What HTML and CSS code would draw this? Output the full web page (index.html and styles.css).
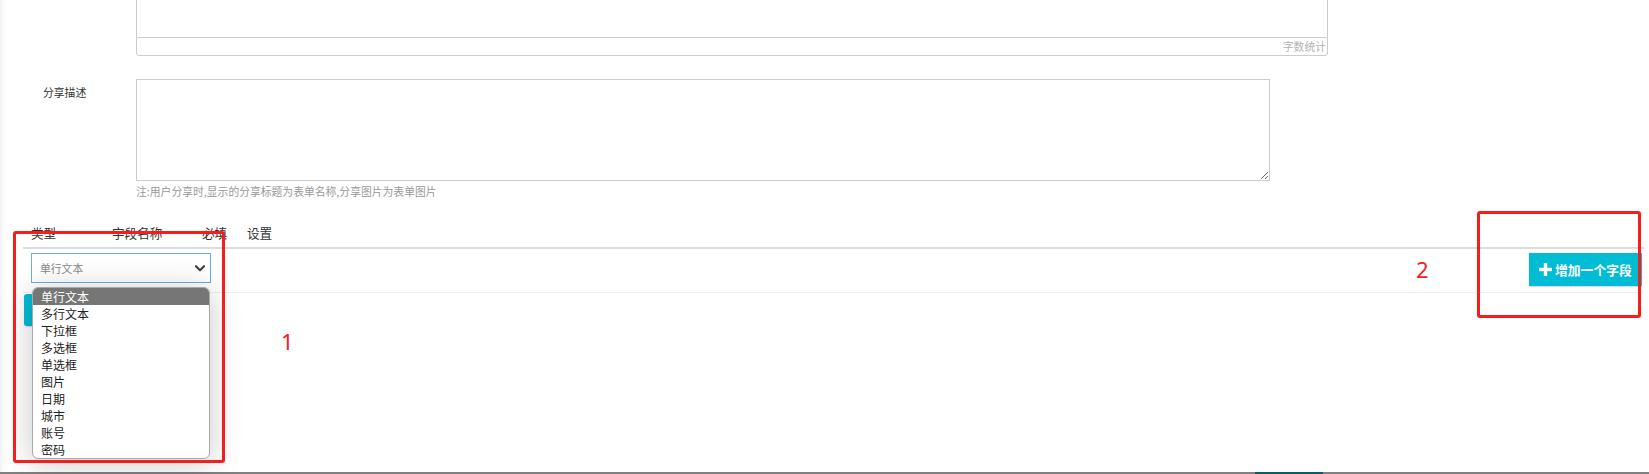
FILE: index.html
```html
<!DOCTYPE html>
<html lang="zh-CN">
<head>
<meta charset="utf-8">
<title>表单设置</title>
<link rel="stylesheet" href="styles.css">
</head>
<body>
<div class="page">
  <div class="editor-row">
    <div class="editor">
      <div class="editor-body"></div>
      <div class="editor-footer">字数统计</div>
    </div>
  </div>

  <div class="share-row">
    <label class="form-label">分享描述</label>
    <div class="form-field">
      <textarea class="share-textarea"></textarea>
      <div class="hint">注:用户分享时,显示的分享标题为表单名称,分享图片为表单图片</div>
    </div>
  </div>

  <div class="fields">
    <div class="fields-head">
      <div class="th th-type">类型</div>
      <div class="th th-name">字段名称</div>
      <div class="th th-req">必填</div>
      <div class="th th-set">设置</div>
    </div>
    <div class="fields-row">
      <div class="select-wrap">
        <div class="select">
          <span class="select-value">单行文本</span>
          <svg class="chevron" width="10" height="7" viewBox="0 0 10 7"><polyline points="1,1.2 5,5.2 9,1.2" fill="none" stroke="#444" stroke-width="2.2" stroke-linecap="round" stroke-linejoin="round"/></svg>
        </div>
        <ul class="select-menu">
          <li class="active">单行文本</li>
          <li>多行文本</li>
          <li>下拉框</li>
          <li>多选框</li>
          <li>单选框</li>
          <li>图片</li>
          <li>日期</li>
          <li>城市</li>
          <li>账号</li>
          <li>密码</li>
        </ul>
      </div>
      <button class="btn-add">
        <svg class="plus" width="13" height="13" viewBox="0 0 13 13"><rect x="4.8" y="0" width="3.4" height="13" fill="#fff"/><rect x="0" y="4.8" width="13" height="3.4" fill="#fff"/></svg>
        <span>增加一个字段</span>
      </button>
    </div>
  </div>

  <div class="actions">
    <button class="btn-save" aria-label="保存"></button>
  </div>

  <div class="annot annot-box-1"></div>
  <div class="annot annot-box-2"></div>
  <div class="annot annot-num annot-num-1">1</div>
  <div class="annot annot-num annot-num-2">2</div>
</div>
<div class="taskbar"><span class="taskbar-app"></span></div>
</body>
</html>
```

FILE: styles.css
```css
* { box-sizing: border-box; }
html, body { margin: 0; padding: 0; }
body {
  width: 1649px;
  height: 474px;
  overflow: hidden;
  display: flex;
  flex-direction: column;
  background: linear-gradient(to right, #f1f1f1 0, #fafafa 3px, #fff 8px);
  font-family: "Noto Sans CJK SC", "Noto Sans", sans-serif;
  color: #333;
}
.page { position: relative; flex: 1; }

/* editor with counter */
.editor-row { padding-left: 136px; }
.editor { width: 1192px; }
.editor-body {
  height: 37px;
  border-left: 1px solid #ccc;
  border-right: 1px solid #ccc;
}
.editor-footer {
  height: 19px;
  border: 1px solid #ccc;
  border-radius: 0 0 3px 3px;
  font-size: 10.8px;
  line-height: 17px;
  text-align: right;
  color: #b3b3b3;
  padding-right: 1px;
}

/* share description */
.share-row { display: flex; margin-top: 23px; }
.form-label {
  width: 136px;
  padding: 5px 0 0 43px;
  font-size: 10.8px;
  line-height: 16px;
  color: #333;
}
.share-textarea {
  display: block;
  width: 1134px;
  height: 102px;
  margin: 0;
  padding: 4px;
  border: 1px solid #ccc;
  border-radius: 0;
  background: #fff;
  outline: none;
}
.hint {
  margin-top: 2px;
  font-size: 10.8px;
  line-height: 16px;
  color: #999;
}

/* fields table */
.fields { margin: 20px 5px 0 23px; }
.fields-head {
  display: flex;
  border-bottom: 2px solid #ddd;
}
.th {
  padding: 5px 0 5px 8px;
  font-size: 12.6px;
  line-height: 18px;
  color: #333;
}
.th-type { width: 81px; }
.th-name { width: 90px; }
.th-req { width: 45px; }
.th-set { width: 60px; }

.fields-row {
  display: flex;
  justify-content: space-between;
  align-items: flex-start;
  padding: 4px 2px 6px 8px;
  border-bottom: 1px solid #eee;
}
.select-wrap { position: relative; width: 180px; }
.select {
  height: 30px;
  border: 1px solid #66afe9;
  padding: 0 5px 0 8px;
  display: flex;
  align-items: center;
  justify-content: space-between;
  background: #fff;
}
.select-value { font-size: 10.8px; line-height: 16px; color: #888; }
.chevron { display: block; }

.select-menu {
  position: absolute;
  left: 1px;
  top: 34px;
  width: 178px;
  margin: 0;
  padding: 0;
  list-style: none;
  background: #fff;
  border: 1px solid #a9a9a9;
  border-radius: 6px;
  overflow: hidden;
  box-shadow: 0 4px 32px rgba(0, 0, 0, 0.22);
  z-index: 5;
}
.select-menu li {
  height: 17px;
  line-height: 17px;
  padding-left: 8px;
  font-size: 12px;
  color: #222;
}
.select-menu li.active { background: #767676; color: #fff; }

.btn-add {
  display: flex;
  align-items: center;
  gap: 3px;
  height: 33px;
  width: 113px;
  padding: 0 0 0 10px;
  border: 0;
  margin: 0;
  background: #00bcd4;
  color: #fff;
  font-family: inherit;
  font-size: 12.8px;
  font-weight: bold;
  line-height: 16px;
  box-shadow: 0 1px 1px rgba(180, 60, 200, 0.25);
}
.plus { display: block; flex: none; }

.actions { padding-left: 24px; margin-top: 1px; }
.btn-save {
  display: block;
  width: 80px;
  height: 32px;
  border: 0;
  border-radius: 3px;
  background: #00bcd4;
  box-shadow: 0 1px 1px rgba(180, 60, 200, 0.25);
}

/* annotations */
.annot { position: absolute; z-index: 10; }
.annot-box-1 {
  left: 13px; top: 231px; width: 212px; height: 232px;
  border: 3px solid #f81d1d;
  border-radius: 3px;
}
.annot-box-2 {
  left: 1477px; top: 211px; width: 164px; height: 107px;
  border: 3px solid #f81d1d;
  border-radius: 3px;
}
.annot-num {
  font-family: "Noto Sans", sans-serif;
  font-size: 22px;
  line-height: 22px;
  color: #f01e1e;
}
.annot-num-1 { left: 281px; top: 330px; }
.annot-num-2 { left: 1416px; top: 258px; }

/* bottom strip */
.taskbar {
  flex: none;
  height: 2px;
  background: #808080;
  display: flex;
}
.taskbar-app {
  margin-left: 1255px;
  width: 68px;
  height: 2px;
  background: #0b5d5f;
}
```
